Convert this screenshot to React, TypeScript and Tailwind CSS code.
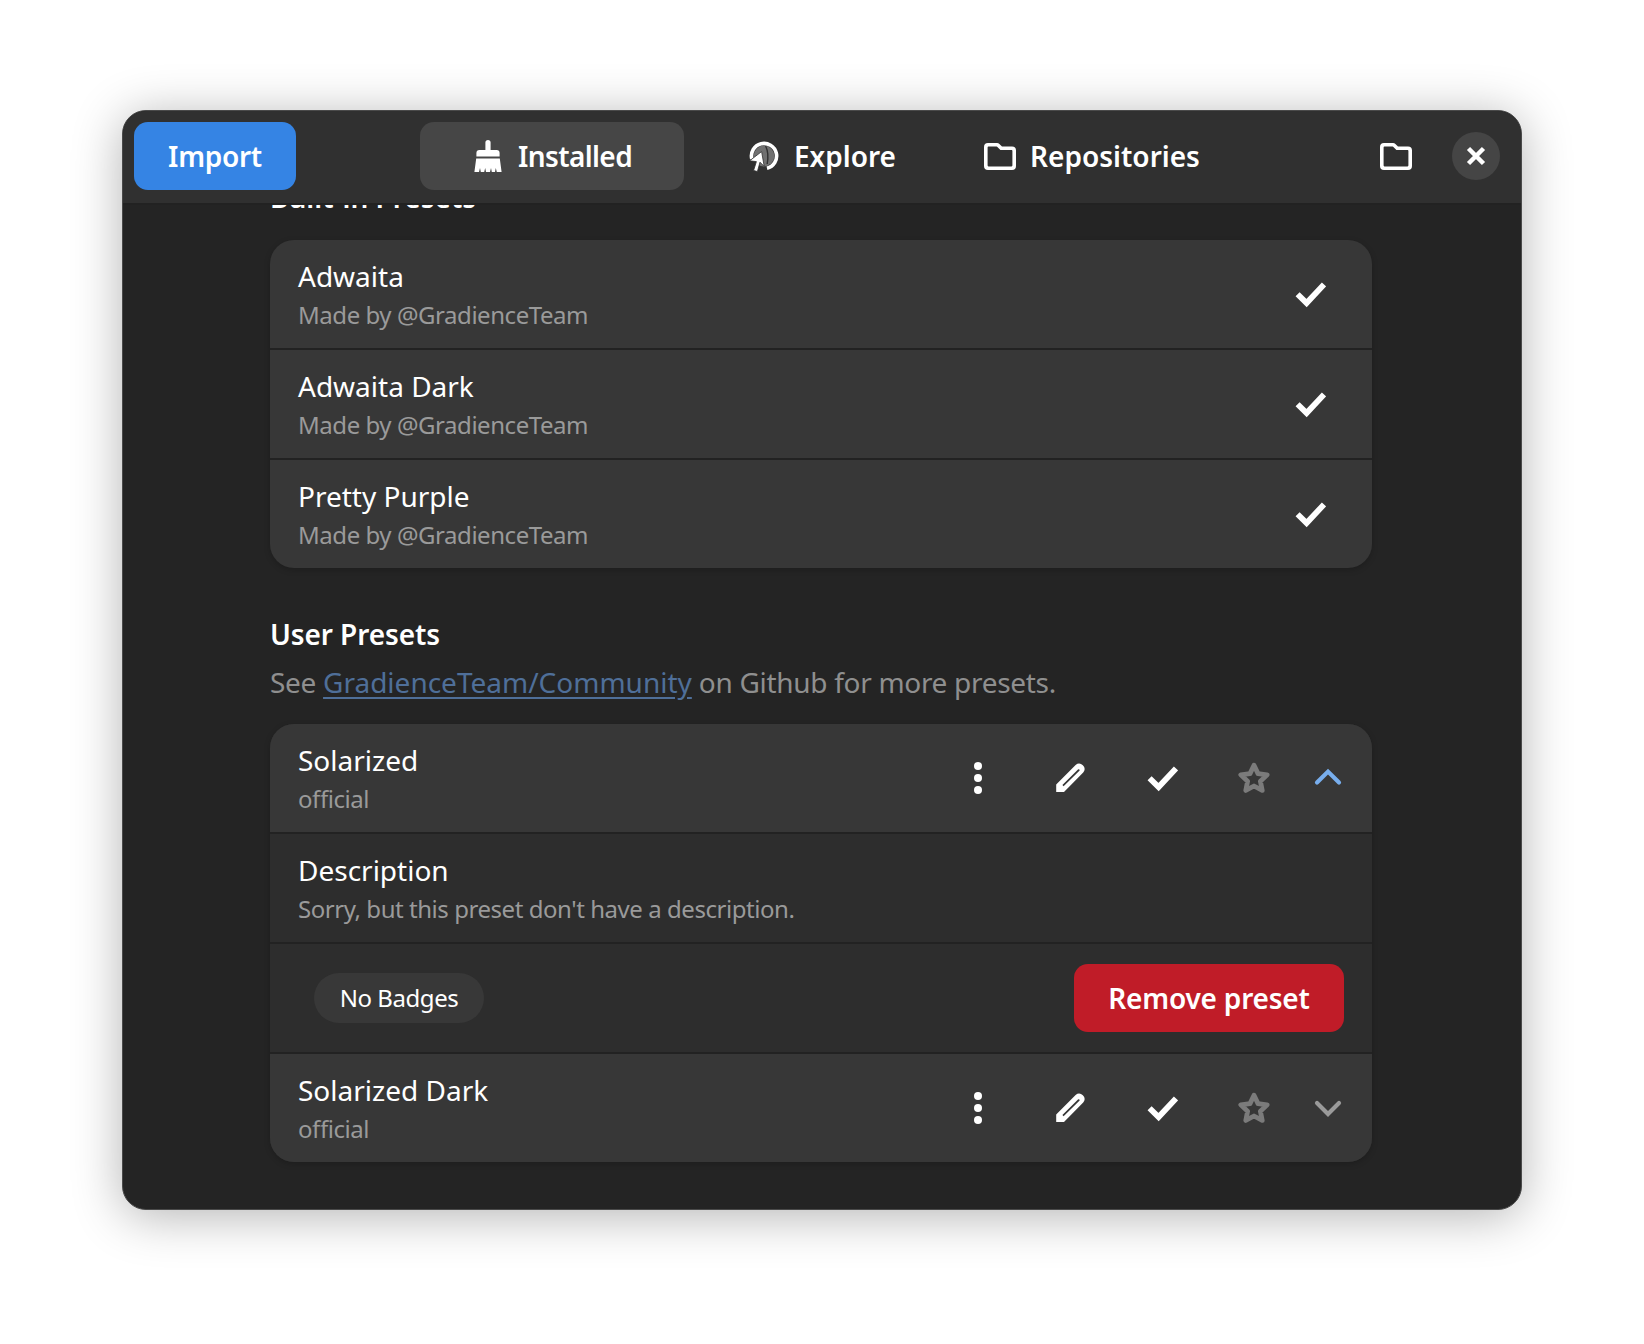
import type { ReactNode } from 'react'

const builtIn = ['Adwaita', 'Adwaita Dark', 'Pretty Purple']

function Icon({ children, className }: { children: ReactNode; className?: string }) {
  return (
    <svg viewBox="0 0 16 16" className={className ?? 'h-8 w-8'} fill="currentColor">
      {children}
    </svg>
  )
}

function BrushIcon() {
  return (
    <Icon>
      <path d="M6.700 1.300a1.300 1.300 0 0 1 2.600 0V5h3a1.500 1.500 0 0 1 1.500 1.500V8.300H2.200V6.500A1.500 1.500 0 0 1 3.700 5h3z" />
      <path d="M2.100 9.200h11.800l.9 6.800h-2.400l-.5-2-.4 2H9.900l-.4-2-.5 2H7l-.4-2-.5 2H4.400l-.4-2-.5 2H1.200z" />
    </Icon>
  )
}

function ExploreIcon() {
  return (
    <Icon>
      <circle cx="8" cy="8" r="5.200" fill="#707070" />
      <path d="M8.800 3C9.800 5 10.300 8 9.600 12" fill="none" stroke="#303030" strokeWidth="0.700" />
      <path d="M1.900 9.500A6.300 6.300 0 1 1 9.500 14.100" fill="none" stroke="currentColor" strokeWidth="1.800" />
      <path
        d="M6.800 5.800 8.100 13.200 6 11.100 4.700 15.800 2.800 15.200 4.200 10.800 .8 10.400z"
        stroke="#303030"
        strokeWidth="0.400"
      />
    </Icon>
  )
}

function FolderIcon() {
  return (
    <Icon>
      <path
        fillRule="evenodd"
        d="M2 1.500h4.500c.5 0 .9.200 1.200.5L9 3.200h5a2 2 0 0 1 2 2V13a2 2 0 0 1-2 2H2a2 2 0 0 1-2-2V3.500a2 2 0 0 1 2-2zM1.800 5.200V12.800c0 .2.200.4.400.4h11.600c.2 0 .4-.2.400-.4V5.400c0-.2-.2-.4-.4-.4H8.200L6.700 3.500c-.1-.1-.2-.2-.4-.2H2.200c-.2 0-.4.200-.4.400z"
      />
    </Icon>
  )
}

function MenuDots() {
  return (
    <Icon>
      <circle cx="8" cy="2" r="2" />
      <circle cx="8" cy="8" r="2" />
      <circle cx="8" cy="14" r="2" />
    </Icon>
  )
}

function PencilIcon() {
  return (
    <Icon>
      <path
        fillRule="evenodd"
        d="M10.800 1.500a2.700 2.700 0 0 1 3.800 3.800L5 15H1.100v-3.700zM12 3.700 4.200 11.500l.6.600 7.900-7.700a.5.500 0 0 0-.7-.7z"
      />
    </Icon>
  )
}

function CheckIcon() {
  return (
    <Icon>
      <path d="M1.800 8.100 6.300 12.500 15 3.200" fill="none" stroke="currentColor" strokeWidth="2.900" />
    </Icon>
  )
}

function StarIcon() {
  return (
    <Icon>
      <path
        d="M8 1.600 10 5.800 14.600 6.400 11.200 9.600 12.100 14.200 8 12 3.900 14.200 4.800 9.600 1.400 6.400 6 5.800z"
        fill="none"
        stroke="currentColor"
        strokeWidth="2.400"
        strokeLinejoin="round"
      />
    </Icon>
  )
}

function Chevron({ up }: { up?: boolean }) {
  return (
    <Icon>
      <path
        d={up ? 'M2.500 10.300 8 4.800l5.500 5.500' : 'M2.500 5.500 8 11l5.500-5.500'}
        fill="none"
        stroke="currentColor"
        strokeWidth="2.100"
        strokeLinecap="round"
      />
    </Icon>
  )
}

function RowText({ title, sub }: { title: string; sub: string }) {
  return (
    <div className="flex flex-col pt-[2px]">
      <div className="text-[28px] leading-[38px] text-white">{title}</div>
      <div className="mt-[1px] text-[24px] leading-[38px] tracking-[-0.45px] text-[#9a9a9a]">{sub}</div>
    </div>
  )
}

function Cell({ children, className }: { children: ReactNode; className?: string }) {
  return <div className={`flex w-[92px] justify-center ${className ?? 'text-white'}`}>{children}</div>
}

function BuiltInRow({ name }: { name: string }) {
  return (
    <div className="flex h-[110px] items-center justify-between border-b-2 border-[#222222] pr-4 pl-7 last:h-[108px] last:border-b-0">
      <RowText title={name} sub="Made by @GradienceTeam" />
      <Cell>
        <CheckIcon />
      </Cell>
    </div>
  )
}

function UserRow({ name, open }: { name: string; open?: boolean }) {
  return (
    <div className="flex h-[108px] items-center justify-between bg-[#373737] pr-4 pl-7">
      <RowText title={name} sub="official" />
      <div className="flex items-center">
        <Cell>
          <MenuDots />
        </Cell>
        <Cell>
          <PencilIcon />
        </Cell>
        <Cell>
          <CheckIcon />
        </Cell>
        <Cell className="text-[#7b7b7b]">
          <StarIcon />
        </Cell>
        <div className={`flex w-[56px] justify-center ${open ? 'text-[#78aeed]' : 'text-[#9a9a9a]'}`}>
          <Chevron up={open} />
        </div>
      </div>
    </div>
  )
}

export default function App() {
  return (
    <div className="min-h-[1344px] bg-white px-[122px] pt-[110px] font-['Noto_Sans',sans-serif]">
      <div className="flex h-[1100px] flex-col overflow-hidden rounded-[24px] border border-[#4a4a4a] bg-[#242424] shadow-[0_6px_50px_rgba(0,0,0,0.3)]">
        <header className="relative z-10 grid h-[94px] shrink-0 grid-cols-[1fr_auto_1fr] items-center border-b-2 border-[#222222] bg-[#303030] px-[11px] pb-[2px]">
          <div>
            <button className="h-[68px] w-[162px] rounded-[14px] bg-[#3584e4] text-[28px] font-semibold tracking-[-0.3px] text-white">
              Import
            </button>
          </div>
          <nav className="flex gap-[6px] text-[28px] font-semibold text-white">
            <div className="flex h-[68px] w-[264px] items-center justify-center gap-[14px] rounded-[14px] bg-[#464646] tracking-[-0.6px]">
              <BrushIcon />
              Installed
            </div>
            <div className="flex h-[68px] w-[264px] items-center justify-center gap-[14px]">
              <ExploreIcon />
              Explore
            </div>
            <div className="flex h-[68px] w-[264px] items-center justify-center gap-[14px]">
              <FolderIcon />
              Repositories
            </div>
          </nav>
          <div className="flex items-center justify-end gap-[40px] pr-[10px] text-white">
            <FolderIcon />
            <button className="flex h-12 w-12 items-center justify-center rounded-full bg-[#454545]">
              <svg viewBox="0 0 16 16" className="h-6 w-6" fill="none" stroke="currentColor" strokeWidth="3">
                <path d="M3 3l10 10M13 3 3 13" />
              </svg>
            </button>
          </div>
        </header>

        <main className="min-h-0 flex-1 overflow-hidden pr-[149px] pl-[147px]">
          <h2 className="mt-[-27px] text-[28px] leading-[38px] font-semibold text-white">Built-in Presets</h2>
          <div className="mt-[24px] overflow-hidden rounded-[24px] bg-[#373737] shadow-[0_2px_6px_rgba(0,0,0,0.2)]">
            {builtIn.map((name) => (
              <BuiltInRow key={name} name={name} />
            ))}
          </div>

          <h2 className="mt-[47px] text-[28px] leading-[38px] font-semibold tracking-[-0.1px] text-white">User Presets</h2>
          <p className="mt-[10px] text-[28px] leading-[38px] tracking-[-0.3px] text-[#8f8f8f]">
            See <span className="tracking-normal text-[#4f6f99] underline underline-offset-4">GradienceTeam/Community</span>{' '}
            on Github for more presets.
          </p>

          <div className="mt-[23px] overflow-hidden rounded-[24px] bg-[#2d2d2d] shadow-[0_2px_6px_rgba(0,0,0,0.2)]">
            <UserRow name="Solarized" open />
            <div className="flex h-[112px] items-center border-y-2 border-[#222222] pl-7">
              <RowText title="Description" sub="Sorry, but this preset don't have a description." />
            </div>
            <div className="flex h-[108px] items-center justify-between pr-7 pl-[44px]">
              <div className="flex h-[50px] w-[170px] items-center justify-center rounded-full bg-[#383838] text-[24px] tracking-[-0.45px] text-white">
                No Badges
              </div>
              <button className="h-[68px] w-[270px] rounded-[14px] bg-[#c01c28] text-[28px] font-semibold tracking-[-0.2px] text-white">
                Remove preset
              </button>
            </div>
            <div className="border-t-2 border-[#222222]">
              <UserRow name="Solarized Dark" />
            </div>
          </div>
        </main>
      </div>
    </div>
  )
}
